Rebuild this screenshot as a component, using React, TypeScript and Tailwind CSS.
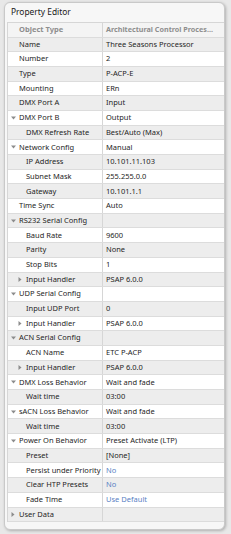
import { JSX } from 'react'

type Row = {
  label: string
  value?: string
  level: 0 | 1
  toggle?: 'open' | 'closed'
  blue?: boolean
}

const ROWS: Row[] = [
  { label: 'Name', value: 'Three Seasons Processor', level: 0 },
  { label: 'Number', value: '2', level: 0 },
  { label: 'Type', value: 'P-ACP-E', level: 0 },
  { label: 'Mounting', value: 'ERn', level: 0 },
  { label: 'DMX Port A', value: 'Input', level: 0 },
  { label: 'DMX Port B', value: 'Output', level: 0, toggle: 'open' },
  { label: 'DMX Refresh Rate', value: 'Best/Auto (Max)', level: 1 },
  { label: 'Network Config', value: 'Manual', level: 0, toggle: 'open' },
  { label: 'IP Address', value: '10.101.11.103', level: 1 },
  { label: 'Subnet Mask', value: '255.255.0.0', level: 1 },
  { label: 'Gateway', value: '10.101.1.1', level: 1 },
  { label: 'Time Sync', value: 'Auto', level: 0 },
  { label: 'RS232 Serial Config', level: 0, toggle: 'open' },
  { label: 'Baud Rate', value: '9600', level: 1 },
  { label: 'Parity', value: 'None', level: 1 },
  { label: 'Stop Bits', value: '1', level: 1 },
  { label: 'Input Handler', value: 'PSAP 6.0.0', level: 1, toggle: 'closed' },
  { label: 'UDP Serial Config', level: 0, toggle: 'open' },
  { label: 'Input UDP Port', value: '0', level: 1 },
  { label: 'Input Handler', value: 'PSAP 6.0.0', level: 1, toggle: 'closed' },
  { label: 'ACN Serial Config', level: 0, toggle: 'open' },
  { label: 'ACN Name', value: 'ETC P-ACP', level: 1 },
  { label: 'Input Handler', value: 'PSAP 6.0.0', level: 1, toggle: 'closed' },
  { label: 'DMX Loss Behavior', value: 'Wait and fade', level: 0, toggle: 'open' },
  { label: 'Wait time', value: '03:00', level: 1 },
  { label: 'sACN Loss Behavior', value: 'Wait and fade', level: 0, toggle: 'open' },
  { label: 'Wait time', value: '03:00', level: 1 },
  { label: 'Power On Behavior', value: 'Preset Activate (LTP)', level: 0, toggle: 'open' },
  { label: 'Preset', value: '[None]', level: 1 },
  { label: 'Persist under Priority', value: 'No', level: 1, blue: true },
  { label: 'Clear HTP Presets', value: 'No', level: 1, blue: true },
  { label: 'Fade Time', value: 'Use Default', level: 1, blue: true },
  { label: 'User Data', level: 0, toggle: 'closed' },
]

function Toggle({ kind }: { kind: 'open' | 'closed' }): JSX.Element {
  if (kind === 'open') {
    return (
      <svg width="5" height="4" viewBox="0 0 5 4" className="shrink-0">
        <path d="M0 0.5 L5 0.5 L2.5 3.5 Z" fill="#8c8c8c" />
      </svg>
    )
  }
  return (
    <svg width="4" height="5" viewBox="0 0 4 5" className="shrink-0">
      <path d="M0.5 0 L3.5 2.5 L0.5 5 Z" fill="#8c8c8c" />
    </svg>
  )
}

function PropertyRow({ row, index }: { row: Row; index: number }): JSX.Element {
  const shaded = index % 2 === 0
  const arrowLeft = row.level === 0 ? 'pl-[3px]' : 'pl-[10px]'
  const textLeft = row.level === 0 ? 'pl-[11px]' : 'pl-[18px]'

  return (
    <div
      className={`flex h-[14.7px] border-b border-[#dcdcdc] ${shaded ? 'bg-[#ededed]' : 'bg-white'}`}
    >
      <div className="flex w-[95px] shrink-0 items-center border-r border-[#d6d6d6]">
        {row.toggle ? (
          <div className={`flex items-center ${arrowLeft}`}>
            <div className="flex w-[8px] items-center">
              <Toggle kind={row.toggle} />
            </div>
            <span className="whitespace-nowrap">{row.label}</span>
          </div>
        ) : (
          <span className={`whitespace-nowrap ${textLeft}`}>{row.label}</span>
        )}
      </div>
      <div
        className={`flex min-w-0 flex-1 items-center pl-[3px] ${row.blue ? 'text-[#5a7fc4]' : ''}`}
      >
        <span className="whitespace-nowrap">{row.value}</span>
      </div>
    </div>
  )
}

export default function App(): JSX.Element {
  return (
    <div
      className="h-[534px] w-[231px] overflow-hidden bg-[#e8e8e8] pl-[4px] pt-[2px] text-[7.5px] text-[#1e1e1e]"
      style={{ fontFamily: '"Noto Sans", "Liberation Sans", sans-serif' }}
    >
      <div className="h-[528px] w-[221px] overflow-hidden rounded-[6px] border border-[#c9c9c9] bg-[#f7f7f7] shadow-[1px_1px_3px_rgba(0,0,0,0.25)]">
        <div className="flex h-[18.5px] items-center pl-[6px] text-[8.4px] text-[#202020]">
          Property Editor
        </div>
        <div className="ml-[2px] border-l border-t border-[#d6d6d6]">
          <div className="flex h-[15px] border-b border-[#dcdcdc] bg-[#f4f4f4] font-bold text-[#8e8e8e]">
            <div className="flex w-[95px] shrink-0 items-center border-r border-[#d6d6d6] pl-[11px]">
              Object Type
            </div>
            <div className="flex min-w-0 flex-1 items-center pl-[3px]">
              <span className="whitespace-nowrap text-[7.2px]">Architectural Control Proces...</span>
            </div>
          </div>
          {ROWS.map((row, i) => (
            <PropertyRow key={i} row={row} index={i} />
          ))}
        </div>
      </div>
    </div>
  )
}
